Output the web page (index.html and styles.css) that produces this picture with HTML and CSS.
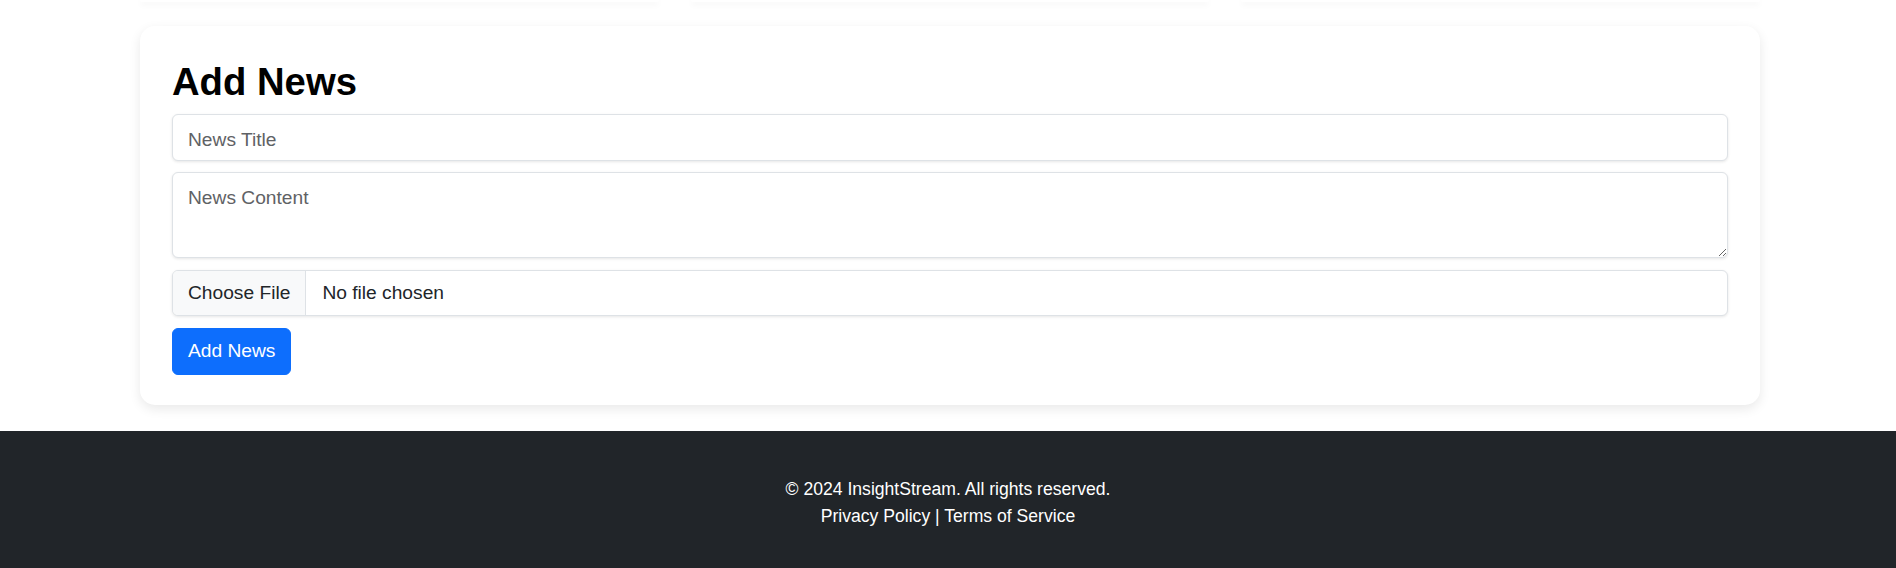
FILE: index.html
```html
<!DOCTYPE html>
<html lang="en">
<head>
<meta charset="utf-8">
<title>InsightStream - Add News</title>
<link rel="stylesheet" href="styles.css">
</head>
<body>
<main class="container">
  <div class="news-row">
    <div class="news-card"></div>
    <div class="news-card"></div>
    <div class="news-card"></div>
  </div>
  <section class="add-card">
    <h2 class="add-title">Add News</h2>
    <form class="add-form">
      <input class="form-control form-text" type="text" placeholder="News Title">
      <textarea class="form-control form-textarea" placeholder="News Content"></textarea>
      <input class="form-control form-file" type="file">
      <div><button class="btn-primary" type="button">Add News</button></div>
    </form>
  </section>
</main>
<footer class="site-footer">
  <p class="footer-line">© 2024 InsightStream. All rights reserved.</p>
  <p class="footer-line"><a href="#" class="footer-link">Privacy Policy</a> | <a href="#" class="footer-link">Terms of Service</a></p>
</footer>
</body>
</html>
```
FILE: styles.css
```css
* { box-sizing: border-box; }
html, body { margin: 0; padding: 0; }
body {
  font-family: "Liberation Sans", Arial, sans-serif;
  color: #212529;
  background: #fff;
  font-size: 16px;
  line-height: 1.5;
}
.container {
  width: 1620px;
  margin-left: 140px;
  padding-bottom: 26px;
}
.news-row {
  display: flex;
  gap: 32px;
  height: 2px;
  margin-bottom: 24px;
}
.news-card {
  flex: 1;
  background: #fff;
  border-radius: 0 0 6px 6px;
  box-shadow: 0 2px 6px rgba(0, 0, 0, 0.08);
}
.add-card {
  background: #fff;
  border-radius: 15px;
  box-shadow: 0 4px 12px rgba(0, 0, 0, 0.09);
  padding: 33px 32px 30px;
}
.add-title {
  margin: 0 0 9px;
  font-size: 38.26px;
  line-height: 1.2;
  font-weight: 700;
  color: #000;
}
.add-form {
  display: flex;
  flex-direction: column;
  gap: 11.5px;
}
.form-control {
  display: block;
  width: 100%;
  font-family: inherit;
  font-size: 19.2px;
  line-height: 1.5;
  padding: 8px 15px;
  color: #212529;
  background: #fff;
  border: 1px solid #dee2e6;
  border-radius: 6px;
  box-shadow: 0 1px 3px rgba(0, 0, 0, 0.1);
  margin: 0;
}
.form-control::placeholder { color: #5f6265; opacity: 1; }
.form-text {
  padding-top: 11px;
  padding-bottom: 5px;
}
.form-textarea {
  height: 86px;
  resize: vertical;
  padding-top: 11px;
}
.form-file { overflow: hidden; }
.form-file::file-selector-button {
  font-family: inherit;
  font-size: 19.2px;
  line-height: 1.5;
  color: #212529;
  background: #f8f9fa;
  border: 0;
  border-right: 1px solid #dee2e6;
  border-radius: 0;
  padding: 8px 15px;
  margin: -8px 16px -8px -15px;
}
.btn-primary {
  font-family: inherit;
  font-size: 19.2px;
  line-height: 1.5;
  color: #fff;
  background: #0d6efd;
  border: 1px solid #0d6efd;
  border-radius: 6px;
  padding: 8px 15px;
  cursor: pointer;
}
.site-footer {
  background: #212529;
  color: #fff;
  text-align: center;
  padding: 45px 0 48px;
  font-size: 17.6px;
  line-height: 1.5;
}
.footer-line { margin: 0; }
.footer-line + .footer-line { margin-top: 1px; }
.footer-link { color: #fff; text-decoration: none; }
```
